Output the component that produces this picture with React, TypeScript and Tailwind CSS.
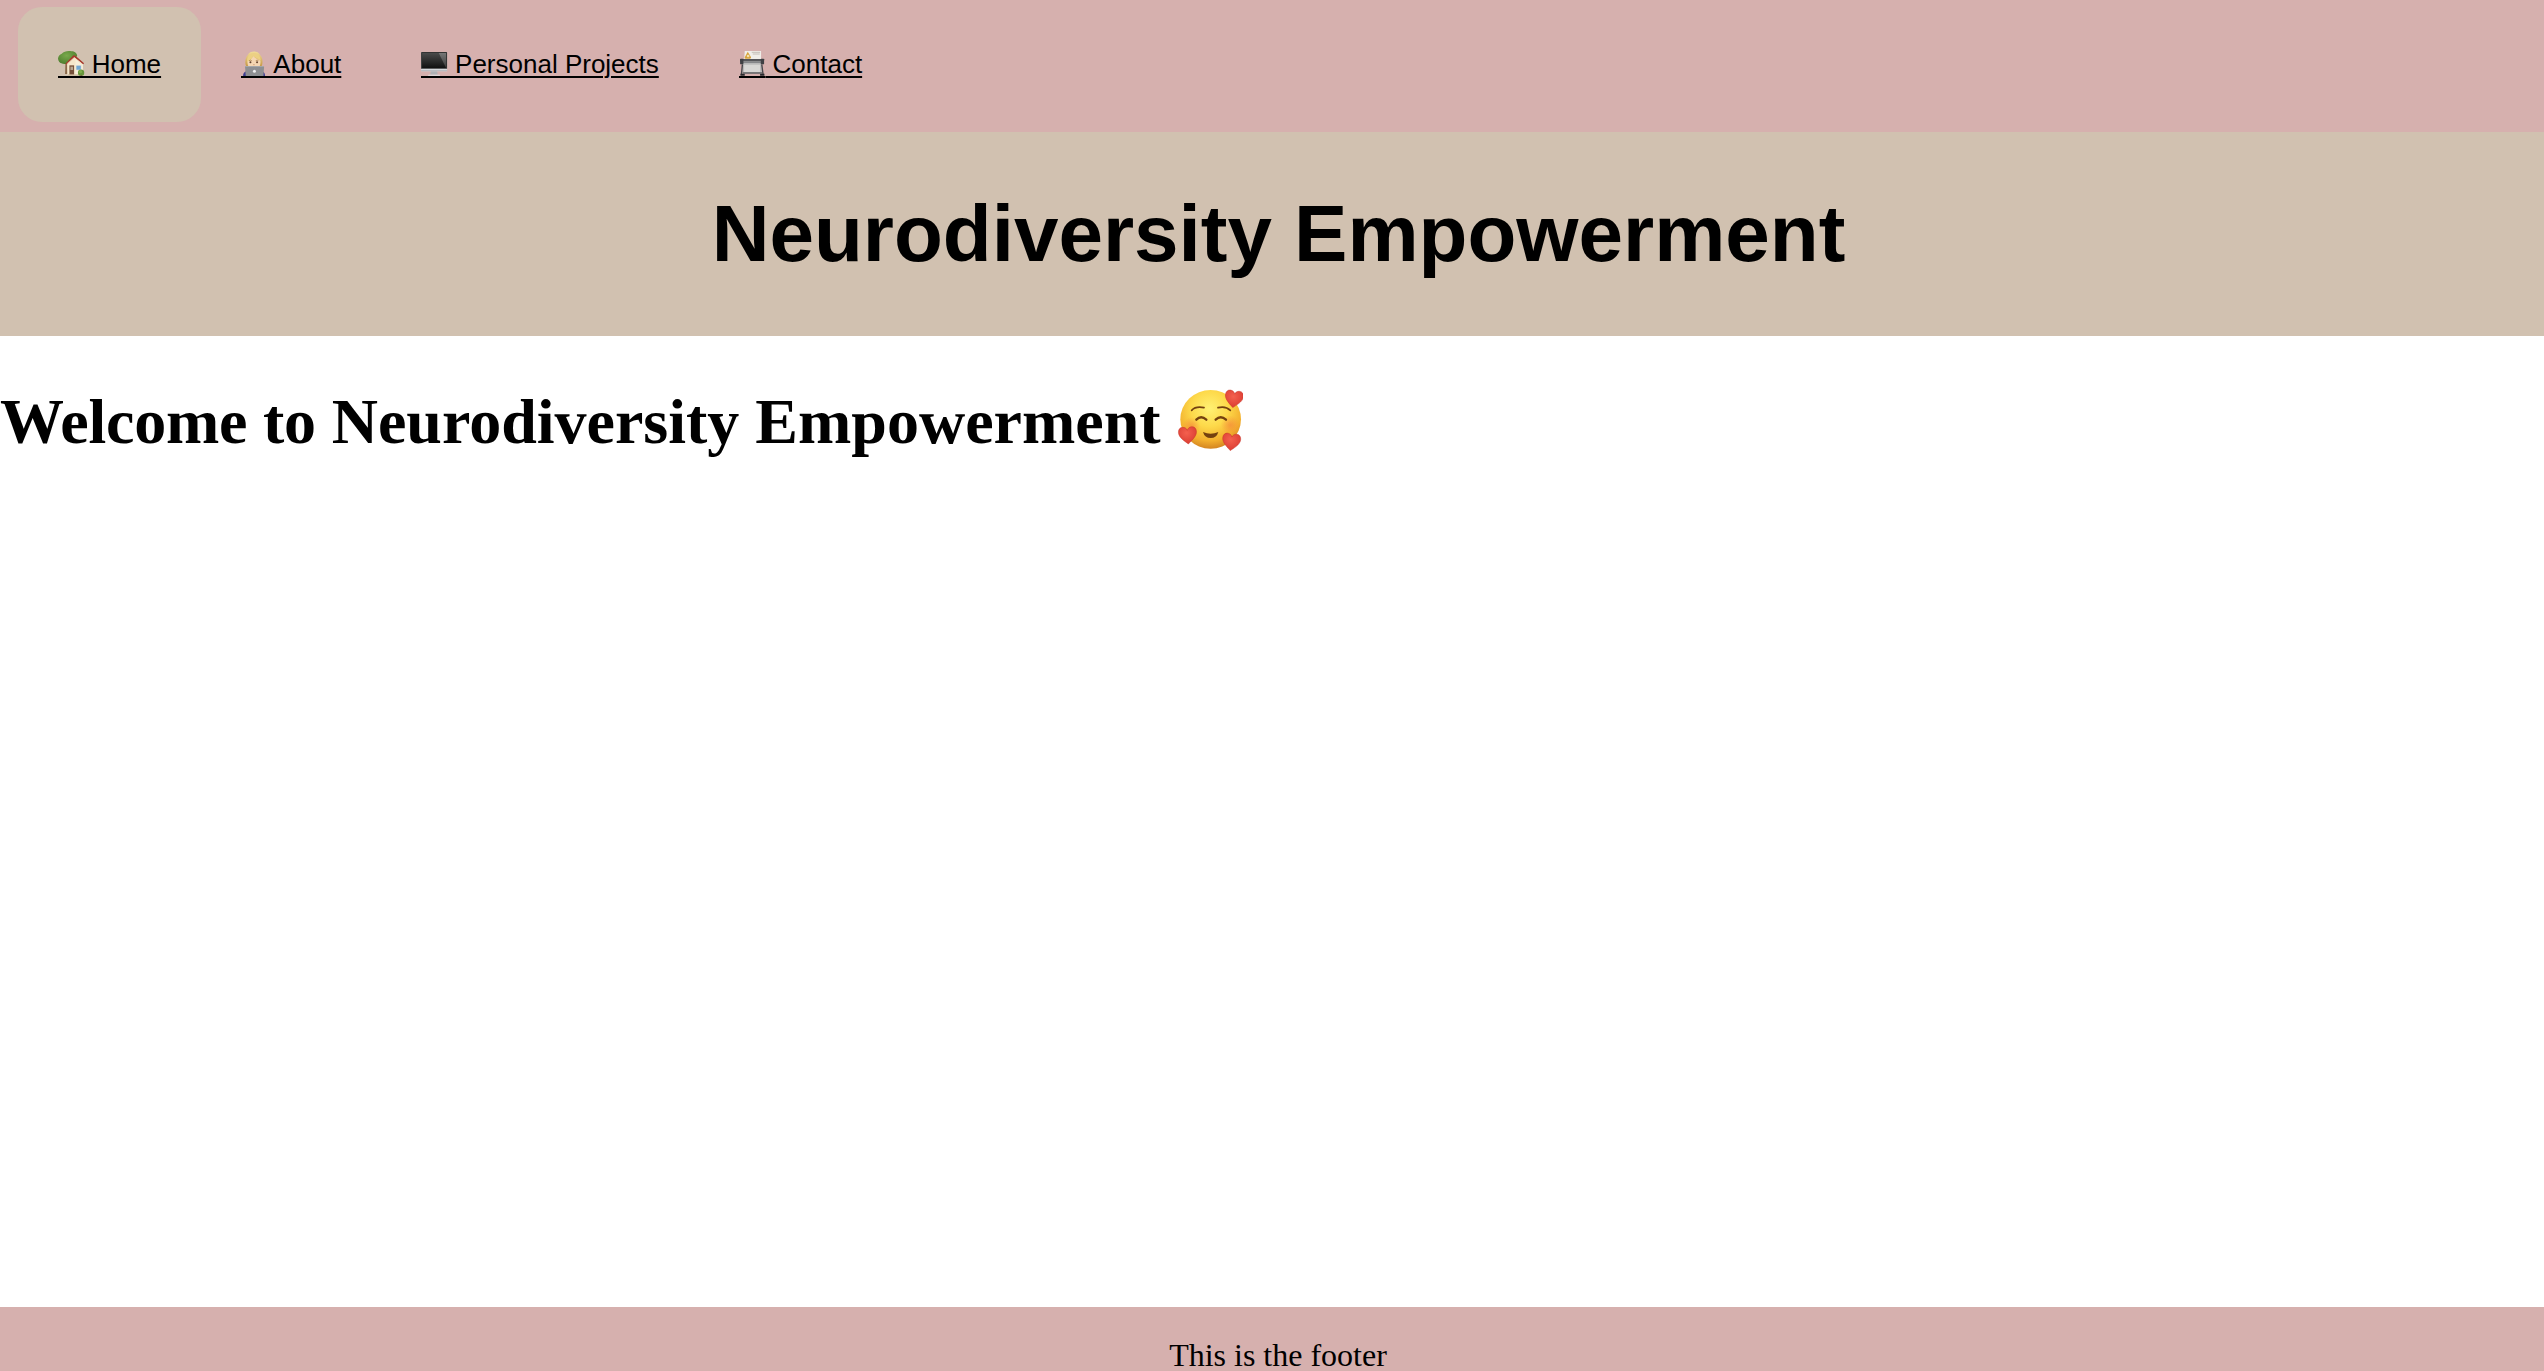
import type { ReactNode } from "react";

function HouseIcon() {
  return (
    <svg viewBox="24 24 79 78" className="block h-[26px] w-[26.5px]">
      <defs>
        <radialGradient id="leaf" cx="45%" cy="35%" r="65%">
          <stop offset="0" stopColor="#79a94c" />
          <stop offset="1" stopColor="#4f7f2f" />
        </radialGradient>
      </defs>
      <path d="M46 62h7l-1 34h-7z" fill="#8a6849" />
      <path d="M24 51c-1-8 5-13 11-16 6-7 20-10 29-7 10 0 18 7 17 14-6 9-15 14-23 20-9 5-18 5-24 2-6-2-9-7-10-13z" fill="url(#leaf)" />
      <path d="M51 63 72 43l26 21v35H52z" fill="#f5e7cb" />
      <path d="M76 46l22 18v35H76z" fill="#f8efd9" />
      <path d="M46 65 70 40l6 1 26 23-3 3-26-21-24 22z" fill="#a7372b" />
      <path d="M50 66 72 47l24 19" fill="none" stroke="#ead9b8" strokeWidth="2" />
      <rect x="58" y="70" width="14" height="29" fill="#77513a" />
      <rect x="61" y="74" width="8" height="10" fill="#b7a792" />
      <rect x="78" y="70" width="15" height="14" fill="#72a8d3" stroke="#e8e4da" strokeWidth="1.5" />
      <path d="M53 97h36v4H53z" fill="#cdbb9c" />
      <circle cx="93" cy="92" r="9.5" fill="#67963b" />
      <circle cx="91" cy="89" r="5" fill="#7fad4c" />
      <path d="M91 100h5v2h-5z" fill="#74553a" />
    </svg>
  );
}

function TechnologistIcon() {
  return (
    <svg viewBox="27 24 79 78" className="block h-[26px] w-[26.5px]">
      <defs>
        <linearGradient id="hair" x1="0" y1="0" x2="0" y2="1">
          <stop offset="0" stopColor="#f1dc96" />
          <stop offset="1" stopColor="#c89b49" />
        </linearGradient>
      </defs>
      <path d="M33 102c0-8 4-13 10-14h46c6 1 10 6 10 14z" fill="#3e3d91" />
      <path d="M42 72c-5-10-2-25 5-33 6-13 31-14 37 0 8 8 9 23 5 33z" fill="url(#hair)" />
      <path d="M46 57c8-3 14-8 17-15 6 7 14 9 22 14 1 10-2 18-6 24H53c-5-6-7-14-7-23z" fill="#f5d6b2" />
      <path d="M45 59c9-4 17-10 18-18 7 8 14 8 23 15 0-12-8-23-20-23-13 0-22 11-21 26z" fill="#ecd083" />
      <circle cx="55" cy="61" r="3" fill="#66442f" />
      <circle cx="75" cy="61" r="3" fill="#66442f" />
      <path d="M51 56q4-3 8 0M71 56q4-3 8 0" stroke="#9a713c" strokeWidth="2" fill="none" />
      <path d="M63 68h5" stroke="#c68e6d" strokeWidth="2" />
      <path d="M41 72q-2 0-2 3l2 27h53l2-27q0-3-2-3z" fill="#8e8f92" />
      <path d="M41 72h53q2 0 2 2H39q0-2 2-2z" fill="#adaeb1" />
      <circle cx="67" cy="88" r="4.5" fill="#eeeeef" />
    </svg>
  );
}

function DesktopIcon() {
  return (
    <svg viewBox="24 24 79 78" className="block h-[26px] w-[26.5px]">
      <defs>
        <linearGradient id="screen" x1="0" y1="0" x2="0" y2="1">
          <stop offset="0" stopColor="#4a4b4b" />
          <stop offset="1" stopColor="#111" />
        </linearGradient>
        <linearGradient id="glare" x1="0" y1="0" x2="0" y2="1">
          <stop offset="0" stopColor="#777" />
          <stop offset="1" stopColor="#383838" />
        </linearGradient>
      </defs>
      <path d="M54 86h18l2 12H51z" fill="#aeb1b5" />
      <path d="M46 98h34l1 3H45z" fill="#e1e2e5" />
      <rect x="24" y="30" width="78" height="58" rx="2" fill="#d6d8dc" />
      <path d="M24 32q0-2 2-2h74q2 0 2 2v48H24z" fill="#323333" />
      <path d="M27 33h72v45H27z" fill="url(#screen)" />
      <path d="M77 33h22v45z" fill="url(#glare)" />
      <path d="M24 84h78v2q0 2-2 2H26q-2 0-2-2z" fill="#b9bbc0" />
    </svg>
  );
}

function CardIndexIcon() {
  return (
    <svg viewBox="27 24 79 78" className="block h-[26px] w-[26.5px]">
      <path d="M44 27h49v30H42z" fill="#f0eee9" />
      <path d="M53 29 63 46q0 4-4 4H46q-3-1-2-4z" fill="#d7a33b" />
      <circle cx="54" cy="42" r="4" fill="#f4dfad" />
      <path d="M65 31h25M68 36h21" stroke="#b1aaa2" strokeWidth="2" />
      <path d="M37 56h58v38H37z" fill="#b9b9b9" />
      <path d="M42 68h48v22H42z" fill="#d8d7d5" />
      <path d="M30 51h72v7H30z" fill="#55565a" />
      <path d="M35 58h62v5H35z" fill="#85878a" />
      <rect x="30" y="50" width="10" height="17" rx="2" fill="#3f4044" />
      <rect x="92" y="50" width="10" height="17" rx="2" fill="#3f4044" />
      <path d="M37 67 34 98M95 67l4 31" stroke="#444549" strokeWidth="4" />
      <path d="M31 98h13M90 98h13" stroke="#29292d" strokeWidth="6" />
      <path d="M38 93h58" stroke="#55565a" strokeWidth="4" />
    </svg>
  );
}

function Heart({ x, y, angle }: { x: number; y: number; angle: number }) {
  return (
    <path
      transform={`translate(${x} ${y}) rotate(${angle})`}
      d="M0 27C-8 19-27 7-27-9c0-9 5-15 13-15 7 0 12 4 14 10 2-6 7-10 14-10 8 0 13 6 13 15C27 7 8 19 0 27z"
      fill="url(#heart)"
      stroke="#c93428"
      strokeWidth="1.5"
    />
  );
}

function LoveFaceIcon() {
  return (
    <svg viewBox="48 54 198 192" className="mt-[3px] block h-16 w-[66px]">
      <defs>
        <radialGradient id="face" cx="48%" cy="32%" r="68%">
          <stop offset="0" stopColor="#fff174" />
          <stop offset="0.45" stopColor="#fdd94a" />
          <stop offset="0.8" stopColor="#f3b02e" />
          <stop offset="1" stopColor="#d48522" />
        </radialGradient>
        <radialGradient id="blush">
          <stop offset="0" stopColor="#f5733a" stopOpacity="0.5" />
          <stop offset="1" stopColor="#f5733a" stopOpacity="0" />
        </radialGradient>
        <radialGradient id="heart" cx="45%" cy="35%" r="70%">
          <stop offset="0" stopColor="#f4604e" />
          <stop offset="1" stopColor="#d93a31" />
        </radialGradient>
      </defs>
      <ellipse cx="149" cy="148" rx="91" ry="88" fill="url(#face)" />
      <circle cx="208" cy="165" r="29" fill="url(#blush)" />
      <circle cx="92" cy="168" r="27" fill="url(#blush)" />
      <g fill="none" stroke="#74410f" strokeLinecap="round">
        <path d="M92 121q12-13 37-8M171 113q23-6 37 8" strokeWidth="5" />
        <path d="M106 149q14-14 30 0M164 149q15-14 31 0" strokeWidth="7" />
      </g>
      <path d="M126 186q23 11 46 0-5 18-23 18t-23-18z" fill="#74410f" />
      <Heart x={219} y={86} angle={8} />
      <Heart x={80} y={195} angle={-4} />
      <Heart x={211} y={215} angle={7} />
    </svg>
  );
}

function NavLink({ icon, label, active = false }: { icon: ReactNode; label: string; active?: boolean }) {
  return (
    <li className={active ? "rounded-[24px] bg-[#d1c1b0]" : ""}>
      <a href="#" className="flex h-[115px] items-start px-10 pt-[43px]">
        <span className="border-b-2 border-black">{icon}</span>
        <span className="whitespace-pre text-[26px] leading-[28px] underline decoration-2 underline-offset-[3px]">
          {` ${label}`}
        </span>
      </a>
    </li>
  );
}

export default function App() {
  return (
    <div className="flex h-[1371px] flex-col overflow-hidden bg-white font-['Liberation_Serif',serif] text-black">
      <nav className="h-[132px] shrink-0 bg-[#d6b0ae] pl-[18px] pt-[7px] font-['Liberation_Sans',sans-serif]">
        <ul className="flex">
          <NavLink icon={<HouseIcon />} label="Home" active />
          <NavLink icon={<TechnologistIcon />} label="About" />
          <NavLink icon={<DesktopIcon />} label="Personal Projects" />
          <NavLink icon={<CardIndexIcon />} label="Contact" />
        </ul>
      </nav>
      <header className="flex h-[204px] shrink-0 items-center justify-center bg-[#d1c1b0] pl-[13px] font-['Liberation_Sans',sans-serif]">
        <h1 className="text-[80px] font-bold leading-[92px]">Neurodiversity Empowerment</h1>
      </header>
      <main className="grow pt-[49px]">
        <h2 className="flex items-start text-[64px] font-bold leading-[74px]">
          <span className="whitespace-pre">
            <span className="tracking-[-0.22px]">Welcome to </span>Neurodiversity Empowerment{" "}
          </span>
          <LoveFaceIcon />
        </h2>
      </main>
      <footer className="h-16 shrink-0 bg-[#d6b0ae] pl-3 pt-[30px] text-center text-[32px] leading-[36px]">
        This is the footer
      </footer>
    </div>
  );
}
